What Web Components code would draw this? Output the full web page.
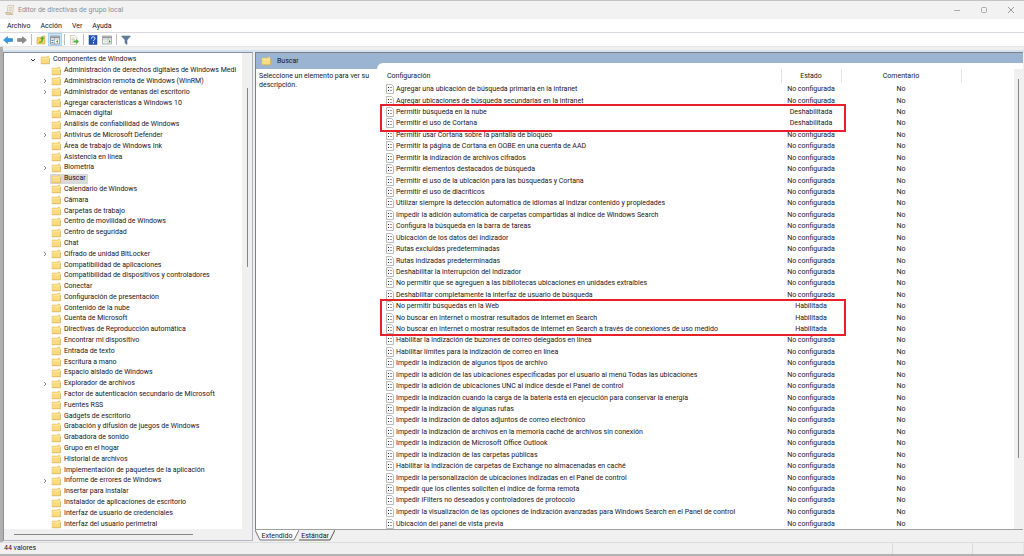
<!DOCTYPE html>
<html lang="es"><head><meta charset="utf-8"><title>Editor de directivas de grupo local</title>
<style>
html,body{height:100%;margin:0}
body{font:7px/11px Roboto,"Noto Sans",sans-serif;color:#1c1420;overflow:hidden}
</style></head><body>
<gp-window></gp-window>
<script>
const define=(name,html,setup)=>{
  const t=document.createElement('template');t.innerHTML=html;
  customElements.define(name,class extends HTMLElement{
    constructor(){super();this.attachShadow({mode:'open'}).append(t.content.cloneNode(true));}
    connectedCallback(){if(setup&&!this.ready){this.ready=true;setup(this,this.shadowRoot);}}
  });
};
const folder='<svg width="10" height="10" viewBox="0 0 20 20" aria-hidden="true"><path d="M2 4h12V2h4v4h1v12H2z" fill="#fadb80"/><path d="M2 18V4h12l1-2h3v3" fill="none" stroke="#e3c06a"/><path d="M2 17.500h17V6" fill="none" stroke="#d9ae55" stroke-width="1.500"/><path d="M3 7h15" stroke="#ffe9a6" stroke-width="1.500"/></svg>';

define('gp-titlebar',`<style>
:host{display:flex;align-items:center;height:19px;background:#f2f2f2;border-top:1px solid #c4c4c4;box-sizing:border-box;padding-left:5px;color:#8e8e8e}
h1{font:inherit;margin:0 0 0 3px;flex:1}
button{width:27px;height:18px;padding:0;border:0;background:none;display:grid;place-items:center}
svg{display:block}
</style>
<svg width="10" height="10" viewBox="0 0 20 20"><path d="M6 1h12c-2 2-1 4-2 8l-1 9H3c3-3 1-6 3-17z" fill="#f3eee3" stroke="#bda988"/><path d="M1 15h11c0 3 1 4 3 4H4c-2 0-3-2-3-4z" fill="#e4d4b7" stroke="#b59d77"/><path d="M8 5h6M8 8h6M7 11h6" stroke="#b9ab9b"/></svg>
<h1>Editor de directivas de grupo local</h1>
<button aria-label="Minimizar"><svg width="8" height="8"><path d="M1 4.500h6" stroke="#aaa"/></svg></button>
<button aria-label="Maximizar"><svg width="8" height="8"><rect x="1.500" y="1.500" width="5" height="5" rx="1" fill="none" stroke="#aaa"/></svg></button>
<button aria-label="Cerrar"><svg width="8" height="8"><path d="M1 1l6 6M7 1l-6 6" stroke="#999"/></svg></button>`);

define('gp-menubar',`<style>
:host{display:flex;height:13px;background:#fff;border-bottom:1px solid #d8d8de;padding-left:7px;gap:10px;align-items:center}
button{font:inherit;color:inherit;padding:1px 0 0;border:0;background:none}
</style><button>Archivo</button><button>Acción</button><button>Ver</button><button>Ayuda</button>`);

define('gp-toolbar',`<style>
:host{display:flex;height:13px;background:#fff;align-items:center;padding:0 1px;border-bottom:1px solid #e6e6e6}
button{width:14px;height:13px;padding:0;border:0;background:none;display:grid;place-items:center}
button.on{background:#cbe4f7;box-shadow:inset 0 0 0 1px #a9d2f0}
svg{display:block}
i{width:1px;height:11px;background:#bdbdbd;margin:0 2px}
</style>
<button aria-label="Atrás"><svg width="10" height="10" viewBox="0 0 20 20"><path d="M1 10l8-7v4h10v6H9v4z" fill="#2f9be8" stroke="#1870b8"/></svg></button>
<button aria-label="Adelante"><svg width="10" height="10" viewBox="0 0 20 20"><path d="M19 10l-8-7v4H1v6h10v4z" fill="#8b8b8b" stroke="#6f6f6f"/></svg></button>
<i></i>
<button aria-label="Subir un nivel"><svg width="10" height="10" viewBox="0 0 20 20"><path d="M2 5h8l2-3h6v16H2z" fill="#f3d066" stroke="#cfa33c"/><path d="M6 14c5 0 5-3 5-6H8l5-5 4 5h-3c0 6-3 8-8 8z" fill="#3faa35"/></svg></button>
<button class="on" aria-label="Mostrar árbol"><svg width="10" height="10" viewBox="0 0 20 20"><path d="M1 2h18v16H1z" fill="#f8f8f8" stroke="#84898f" stroke-width="1.500"/><path d="M1 3h18v3H1z" fill="#8c9298"/><path d="M9 6v12M1 8h18" stroke="#84898f"/><path d="M3 11h4M3 15h4" stroke="#3d87bf" stroke-width="2"/><path d="M16 10l-4 3 4 3z" fill="#3ba53b"/></svg></button>
<i></i>
<button aria-label="Exportar lista"><svg width="10" height="10" viewBox="0 0 20 20"><path d="M3 1h9l4 4v14H3z" fill="#fffdf0" stroke="#aaa58e"/><path d="M5 6h6M5 9h6M5 12h4M5 15h4" stroke="#a5a5a5"/><path d="M9 11h5V8l6 5-6 5v-3H9z" fill="#4db33c"/></svg></button>
<i></i>
<button aria-label="Ayuda"><svg width="10" height="10" viewBox="0 0 20 20"><rect x="2" y="1" width="16" height="18" fill="#2557b8" stroke="#173d8b"/><path d="M7 7c0-5 7-4 7 0 0 2-3 2.500-3 5M11 14v3" fill="none" stroke="#fff" stroke-width="2"/></svg></button>
<button aria-label="Panel de acciones"><svg width="10" height="10" viewBox="0 0 20 20"><path d="M1 2h18v16H1z" fill="#f8f8f8" stroke="#92969b" stroke-width="1.500"/><path d="M1 3h18v3H1z" fill="#92969b"/><path d="M12 6v12M1 8h18" stroke="#92969b"/><path d="M14 10l4 3-4 3z" fill="#3ba53b"/><path d="M3 10h7M3 13h7M3 16h7" stroke="#ccc"/></svg></button>
<i></i>
<button aria-label="Filtrar"><svg width="10" height="10" viewBox="0 0 20 20"><path d="M1 2h18l-7 8v9l-4-3v-6z" fill="#5f7f9d" stroke="#466580"/></svg></button>`);

const tree=`Administración de derechos digitales de Windows Medi|+Administración remota de Windows (WinRM)|+Administrador de ventanas del escritorio|Agregar características a Windows 10|Almacén digital|Análisis de confiabilidad de Windows|+Antivirus de Microsoft Defender|Área de trabajo de Windows Ink|Asistencia en línea|+Biometría|Buscar|Calendario de Windows|Cámara|Carpetas de trabajo|Centro de movilidad de Windows|Centro de seguridad|Chat|+Cifrado de unidad BitLocker|Compatibilidad de aplicaciones|Compatibilidad de dispositivos y controladores|Conectar|Configuración de presentación|Contenido de la nube|Cuenta de Microsoft|Directivas de Reproducción automática|Encontrar mi dispositivo|Entrada de texto|Escritura a mano|Espacio aislado de Windows|+Explorador de archivos|Factor de autenticación secundario de Microsoft|Fuentes RSS|Gadgets de escritorio|Grabación y difusión de juegos de Windows|Grabadora de sonido|Grupo en el hogar|Historial de archivos|Implementación de paquetes de la aplicación|+Informe de errores de Windows|Insertar para instalar|Instalador de aplicaciones de escritorio|Interfaz de usuario de credenciales|Interfaz del usuario perimetral`.split('|');

define('gp-tree-item',`<style>
:host{display:flex;align-items:center;padding:1px 0 0 36px;white-space:nowrap;min-height:0}
:host([root]){padding-left:24px}
.tw{width:10px;height:8px;display:grid;place-items:center}
svg{display:block}
.tw svg{visibility:hidden}
:host([expandable]) .tw svg,:host([root]) .tw svg{visibility:visible}
:host([root]) .tw svg{transform:rotate(90deg)}
:host([root]) .c{stroke:#222}
.label{display:flex;align-items:center;align-self:stretch;gap:3px;padding:0 2px 0 1px}
:host([root]) .label{padding-left:2px}
:host([aria-selected=true]) .label{background:#d9d9d9}
</style><span class="tw"><svg width="8" height="8"><path class="c" d="M3 2l2 2-2 2" fill="none" stroke="#888"/></svg></span><span class="label">${folder}<span><slot></slot></span></span>`);

define('gp-tree',`<style>
:host{display:grid;grid-template:1fr 11px/1fr 10px;background:#f0f0f0;border:1px solid #8a8f98;border-right-color:#b4b6bf;border-bottom-color:#b4b6bf;min-width:0;box-sizing:border-box}
.items{display:grid;grid-auto-rows:minmax(0,1fr);background:#fff;overflow:hidden;padding-top:1px}
.v{display:flex;justify-content:center;padding-top:35px}
.v b{width:1px;height:179px;background:#858585}
.h{display:flex;align-items:center;padding-left:10px}
.h b{width:179px;height:1px;background:#858585}
</style><div class="items" role="tree"></div><div class="v"><b></b></div><div class="h"><b></b></div>`,(h,r)=>{
  const box=r.querySelector('.items');
  const add=(t,a)=>{const e=document.createElement('gp-tree-item');e.setAttribute('role','treeitem');e.textContent=t;if(a)e.setAttribute(a,'');if(t==='Buscar')e.setAttribute('aria-selected','true');box.append(e);};
  add('Componentes de Windows','root');
  tree.forEach(t=>t[0]==='+'?add(t.slice(1),'expandable'):add(t));
});

const rows=`Agregar una ubicación de búsqueda primaria en la intranet|Agregar ubicaciones de búsqueda secundarias en la intranet|-Permitir búsqueda en la nube|-Permitir el uso de Cortana|Permitir usar Cortana sobre la pantalla de bloqueo|Permitir la página de Cortana en OOBE en una cuenta de AAD|Permitir la indización de archivos cifrados|Permitir elementos destacados de búsqueda|Permitir el uso de la ubicación para las búsquedas y Cortana|Permitir el uso de diacríticos|Utilizar siempre la detección automática de idiomas al indizar contenido y propiedades|Impedir la adición automática de carpetas compartidas al índice de Windows Search|Configura la búsqueda en la barra de tareas|Ubicación de los datos del indizador|Rutas excluidas predeterminadas|Rutas indizadas predeterminadas|Deshabilitar la interrupción del indizador|No permitir que se agreguen a las bibliotecas ubicaciones en unidades extraíbles|Deshabilitar completamente la interfaz de usuario de búsqueda|+No permitir búsquedas en la Web|+No buscar en Internet o mostrar resultados de Internet en Search|+No buscar en Internet o mostrar resultados de Internet en Search a través de conexiones de uso medido|Habilitar la indización de buzones de correo delegados en línea|Habilitar límites para la indización de correo en línea|Impedir la indización de algunos tipos de archivo|Impedir la adición de las ubicaciones especificadas por el usuario al menú Todas las ubicaciones|Impedir la adición de ubicaciones UNC al índice desde el Panel de control|Impedir la indización cuando la carga de la batería está en ejecución para conservar la energía|Impedir la indización de algunas rutas|Impedir la indización de datos adjuntos de correo electrónico|Impedir la indización de archivos en la memoria caché de archivos sin conexión|Impedir la indización de Microsoft Office Outlook|Impedir la indización de las carpetas públicas|Habilitar la indización de carpetas de Exchange no almacenadas en caché|Impedir la personalización de ubicaciones indizadas en el Panel de control|Impedir que los clientes soliciten el índice de forma remota|Impedir iFilters no deseados y controladores de protocolo|Impedir la visualización de las opciones de indización avanzadas para Windows Search en el Panel de control|Ubicación del panel de vista previa`.split('|');
const sheet='<svg width="8" height="10" viewBox="0 0 8 10" aria-hidden="true"><path d="M.5 .5h5l2 2v7h-7z" fill="#fafafa" stroke="#bcbcbc"/><path d="M2 3.500h1M2 6.500h1" stroke="#222"/><path d="M4 3.500h2M4 6.500h2" stroke="#999"/></svg>';

define('gp-settings-list',`<style>
:host{display:grid;grid-template-columns:1fr 9px;background:#fff;border-top-left-radius:6px;padding-top:6px;min-height:0;min-width:0}
.list{position:relative;min-height:0}
table{width:100%;height:100%;border-collapse:collapse;table-layout:fixed}
th,td{padding:0;font-weight:400;text-align:center;line-height:10px;white-space:nowrap}
td{padding-top:1px}
thead tr{height:14px}
th{border-right:1px solid #e3e3e3}
th:first-child,td:first-child{text-align:left}
th:first-child{padding-left:10px}
th:last-child{border:0}
td:first-child{padding-left:9px}
.n{display:flex;align-items:center;gap:2px;height:10px}
svg{display:block;flex:none}
col.s{width:60px}col.c{width:120px}col.r{width:53px}
.mark{position:absolute;left:3px;right:168px;border:2px solid #e8202a;box-sizing:border-box;pointer-events:none}
.m1{top:35px;height:28px}
.m2{top:230px;height:37px}
.v{background:#f0f0f0;display:flex;justify-content:center;padding-top:10px}
.v b{width:1px;height:379px;background:#858585}
</style><div class="list"><table><colgroup><col><col class="s"><col class="c"><col class="r"></colgroup><thead><tr><th>Configuración</th><th>Estado</th><th>Comentario</th><th></th></tr></thead><tbody></tbody></table><div class="mark m1"></div><div class="mark m2"></div></div><div class="v"><b></b></div>`,(h,r)=>{
  r.querySelector('tbody').innerHTML=rows.map(t=>{
    const s=t[0]==='-'?'Deshabilitada':t[0]==='+'?'Habilitada':'No configurada';
    return `<tr><td><div class="n">${sheet}<span>${t.replace(/^[-+]/,'')}</span></div></td><td>${s}</td><td>No</td><td></td></tr>`;
  }).join('');
});

define('gp-details',`<style>
:host{display:grid;grid-template:1fr 11px/minmax(0,1fr);min-width:0;min-height:0}
.pane{position:relative;display:grid;grid-template:10px 6px minmax(0,1fr)/121px minmax(0,1fr);border:1px solid #7d8085;border-right:0;border-bottom-color:#a0a0a0;background:linear-gradient(#9ab4d1 16px,#fff 16px);min-height:0}
header{grid-area:1/1/3/3;display:flex;align-items:center;gap:6px;padding-left:5px}
h2{font:inherit;margin:0}
p{grid-area:3/1;margin:0;padding:3px 4px 0 3px;line-height:9px}
gp-settings-list{grid-area:2/2/4/3}
nav{display:flex}
button{font:inherit;color:inherit;border:0;background:none;padding:0;height:11px;position:relative;line-height:10px}
button svg{position:absolute;inset:0;width:100%;height:100%}
button span{position:relative}
.a{width:44px}.b{width:36px;padding-right:4px}
</style><section class="pane"><header>${folder}<h2>Buscar</h2></header><p>Seleccione un elemento para ver su descripción.</p><gp-settings-list></gp-settings-list></section>
<nav><button class="a"><svg viewBox="0 0 44 11" preserveAspectRatio="none"><path d="M0 0l5 10h34l5-10" fill="#fff" stroke="#777"/></svg><span>Extendido</span></button><button class="b"><svg viewBox="0 0 36 11" preserveAspectRatio="none"><path d="M-4 8l1 2h34l5-10" fill="none" stroke="#555"/></svg><span>Estándar</span></button></nav>`);

define('gp-statusbar',`<style>
:host{display:grid;grid-template-columns:1fr 80px 51px;height:14px;background:#f0f0f0;border-top:1px solid #dcdcdc;border-bottom:2px solid #b3b3b3;box-sizing:border-box;align-items:center}
span{padding-left:4px;border-right:1px solid #dadada;line-height:11px}
span:last-child{border-right-color:#e4e4e4}
span:empty{height:11px}
</style><span>44 valores</span><span></span><span></span>`);

define('gp-window',`<style>
:host{display:flex;flex-direction:column;height:100vh;background:#f0f0f0}
main{flex:1;min-height:0;display:grid;grid-template-columns:minmax(0,250fr) minmax(0,768fr);grid-template-rows:minmax(0,1fr);gap:2px;background:linear-gradient(#f0f0f0 3px,#d3e2f0 3px,#d3e2f0 5px,#f0f0f0 5px);padding:5px 1px 1px 0;border-left:3px solid #b0b0b0}
</style><gp-titlebar></gp-titlebar><gp-menubar></gp-menubar><gp-toolbar></gp-toolbar><main><gp-tree></gp-tree><gp-details></gp-details></main><gp-statusbar></gp-statusbar>`);
</script></body></html>
